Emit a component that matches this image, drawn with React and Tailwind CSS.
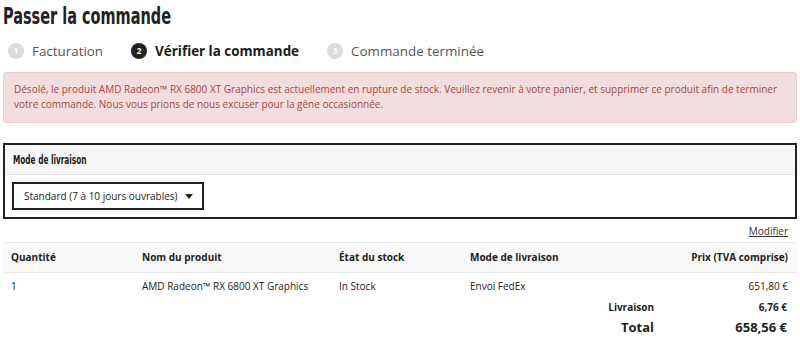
import React from 'react';

const body = { fontFamily: '"Open Sans", "Liberation Sans", sans-serif' };
const cond = { fontFamily: '"DejaVu Sans Condensed", "Liberation Sans Narrow", sans-serif' };

const steps = [
  { n: 1, label: 'Facturation', active: false },
  { n: 2, label: 'Vérifier la commande', active: true },
  { n: 3, label: 'Commande terminée', active: false },
];

const App = () => {
  return (
    <div className="bg-white w-[800px] h-[349px] overflow-hidden px-[3px] text-[#212121]" style={body}>
      <h1 className="text-[23px] font-bold leading-[30px] pt-[1px] scale-x-[0.7] origin-left whitespace-nowrap" style={cond}>
        Passer la commande
      </h1>
      <div className="flex items-center h-[32px] mt-[4px] pl-[5px]">
        {steps.map((s) => (
          <div key={s.n} className="flex items-center mr-[28px]">
            <span
              className={`w-[16px] h-[16px] rounded-full flex items-center justify-center text-[8px] font-bold ${
                s.active ? 'bg-[#212121] text-white' : 'bg-[#dcdcdc] text-white'
              }`}
            >
              {s.n}
            </span>
            <span
              className={`ml-[8px] text-[13.4px] ${s.active ? 'font-bold text-[#1a1a1a]' : 'text-[#555]'}`}
            >
              {s.label}
            </span>
          </div>
        ))}
      </div>
      <div className="mt-[5px] bg-[#f2dede] border border-[#ebccd1] rounded-[3px] px-[10px] pt-[9px] pb-[10px] text-[10px] leading-[15px] text-[#a94442]">
        Désolé, le produit AMD Radeon™ RX 6800 XT Graphics est actuellement en rupture de stock. Veuillez revenir à votre panier, et supprimer ce produit afin de terminer votre commande. Nous vous prions de nous excuser pour la gêne occasionnée.
      </div>

      <div className="mt-[20px] border-2 border-[#212121]">
        <div className="bg-[#f7f7f7] border-b border-[#e6e6e6] h-[30px] flex items-center px-[8px]">
          <span className="text-[12px] font-bold scale-x-[0.68] origin-left whitespace-nowrap" style={cond}>Mode de livraison</span>
        </div>
        <div className="px-[7px] pt-[7px] pb-[7px]">
          <div className="w-[192px] h-[28px] border-2 border-[#212121] flex items-center pl-[10px] pr-[9px] justify-between text-[10px]">
            <span className="whitespace-nowrap">Standard (7 à 10 jours ouvrables)</span>
            <svg width="8" height="5" viewBox="0 0 8 5">
              <path d="M0 0 L8 0 L4 5 Z" fill="#212121" />
            </svg>
          </div>
        </div>
      </div>

      <div className="flex justify-end pr-[9px] mt-[4px] h-[16px]">
        <a className="text-[10px] underline text-[#333] leading-[16px]">Modifier</a>
      </div>

      <div className="mt-[3px] text-[10px]">
        <div className="grid grid-cols-[131px_197px_131px_1fr] bg-[#f9f9f9] border-t border-b border-[#e8e8e8] h-[31px] items-center font-bold">
          <div className="pl-[8px]">Quantité</div>
          <div className="pl-[8px]">Nom du produit</div>
          <div className="pl-[8px]">État du stock</div>
          <div className="flex justify-between pl-[8px] pr-[9px]">
            <span>Mode de livraison</span>
            <span>Prix (TVA comprise)</span>
          </div>
        </div>
        <div className="grid grid-cols-[131px_197px_131px_1fr] h-[26px] items-center text-[#212121]">
          <div className="pl-[8px]">1</div>
          <div className="pl-[8px]">AMD Radeon™ RX 6800 XT Graphics</div>
          <div className="pl-[8px]">In Stock</div>
          <div className="flex justify-between pl-[8px] pr-[9px]">
            <span>Envoi FedEx</span>
            <span>651,80 €</span>
          </div>
        </div>
        <div className="flex justify-end items-center h-[16px] font-bold pr-[10px]">
          <span>Livraison</span>
          <span className="w-[133px] text-right">6,76 €</span>
        </div>
        <div className="flex justify-end items-center h-[26px] font-bold text-[13px] pr-[10px]">
          <span>Total</span>
          <span className="w-[133px] text-right">658,56 €</span>
        </div>
      </div>
    </div>
  );
};

export default App;
